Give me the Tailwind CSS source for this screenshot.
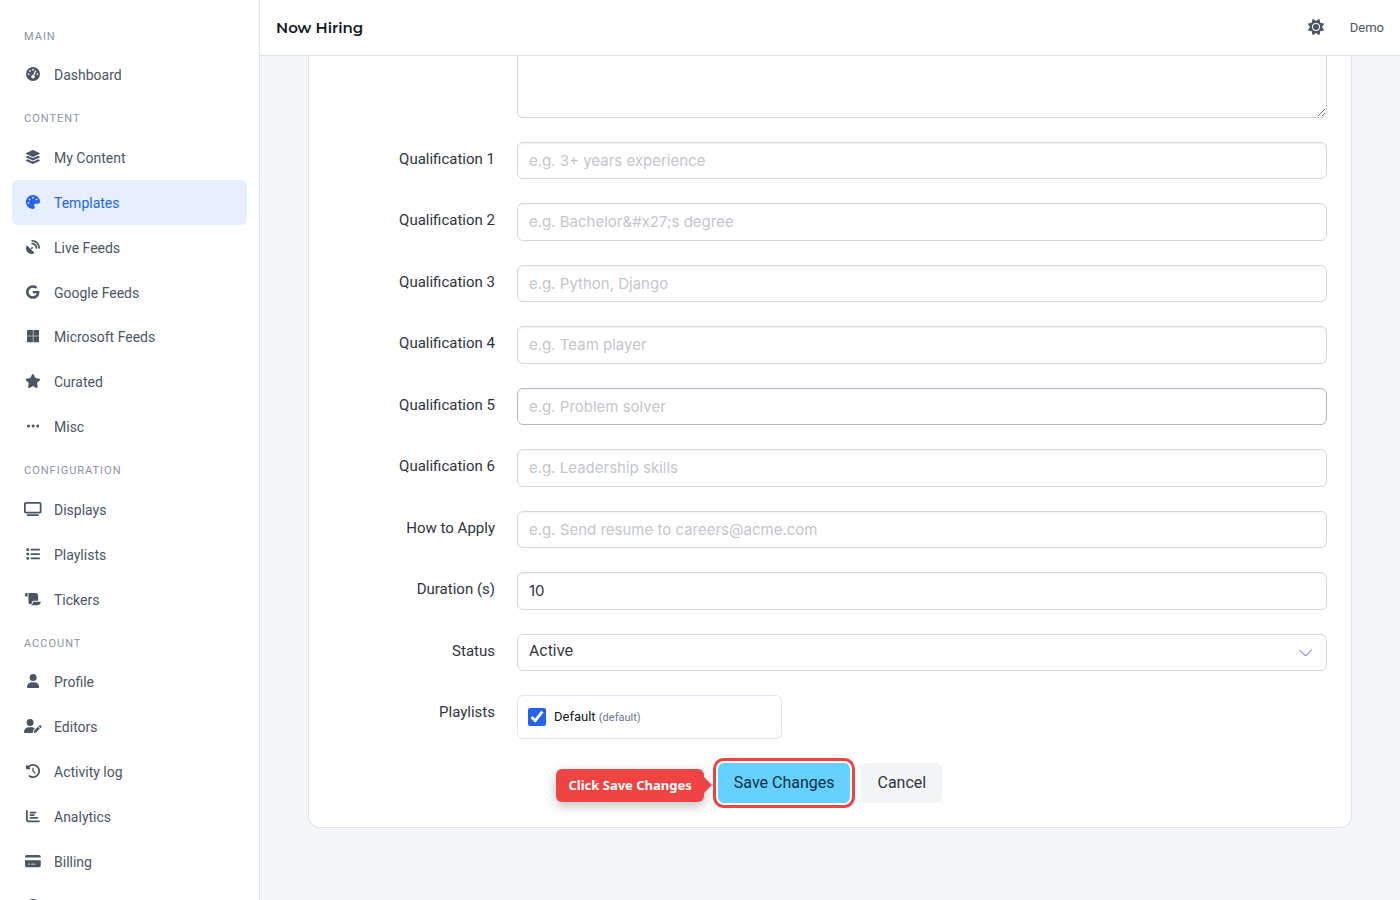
<!DOCTYPE html>
<html lang="en">
<head>
<meta charset="utf-8">
<meta name="viewport" content="width=device-width, initial-scale=1">
<title>Now Hiring</title>
<script src="https://cdn.jsdelivr.net/npm/@tailwindcss/browser@4"></script>
</head>
<body class="flex h-screen overflow-hidden bg-[#f3f5f9] font-['Roboto',sans-serif] text-[#2e333d]">

<aside class="w-[260px] shrink-0 overflow-hidden border-r border-[#e0e3eb] bg-white px-3 pt-4">
  <nav aria-label="Primary" class="text-sm text-[#4b5563]">
    <h2 class="flex h-9 items-center px-3 pt-[6px] text-[11px] tracking-[1px] text-[#8b93a3]">MAIN</h2>
    <a href="#" class="flex h-[45px] items-center gap-3 rounded-md px-3"><span class="flex w-[18px] justify-center pb-0.5"><svg class="h-[14px] w-auto" viewBox="0 0 512 512" fill="currentColor" aria-hidden="true"><path d="M0 256a256 256 0 1 1 512 0A256 256 0 1 1 0 256zM288 96a32 32 0 1 0-64 0 32 32 0 1 0 64 0zM256 416c35.3 0 64-28.7 64-64c0-17.4-6.9-33.1-18.1-44.6L366 161.7c5.3-12.1-.2-26.3-12.3-31.6s-26.3 .2-31.6 12.3L257.9 288c-.6 0-1.3 0-1.9 0c-35.3 0-64 28.7-64 64s28.7 64 64 64zM176 144a32 32 0 1 0-64 0 32 32 0 1 0 64 0zM96 288a32 32 0 1 0 0-64 32 32 0 1 0 0 64zm352-32a32 32 0 1 0-64 0 32 32 0 1 0 64 0z"/></svg></span>Dashboard</a>

    <h2 class="flex h-[38px] items-center px-3 pt-[6px] text-[11px] tracking-[1px] text-[#8b93a3]">CONTENT</h2>
    <a href="#" class="flex h-[45px] items-center gap-3 rounded-md px-3"><span class="flex w-[18px] justify-center pb-0.5"><svg class="h-[14px] w-auto" viewBox="0 0 576 512" fill="currentColor" aria-hidden="true"><path d="M264.5 5.2c14.9-6.9 32.1-6.9 47 0l218.6 101c8.5 3.9 13.9 12.4 13.9 21.8s-5.4 17.9-13.9 21.8l-218.6 101c-14.9 6.9-32.1 6.9-47 0L45.9 149.8C37.4 145.8 32 137.3 32 128s5.4-17.9 13.9-21.8L264.5 5.2zM476.9 209.6l53.2 24.6c8.5 3.9 13.9 12.4 13.9 21.8s-5.4 17.9-13.9 21.8l-218.6 101c-14.9 6.9-32.1 6.9-47 0L45.9 277.8C37.4 273.8 32 265.3 32 256s5.4-17.9 13.9-21.8l53.2-24.6 152 70.2c23.4 10.8 50.4 10.8 73.8 0l152-70.2zm-152 198.2l152-70.2 53.2 24.6c8.5 3.9 13.9 12.4 13.9 21.8s-5.4 17.9-13.9 21.8l-218.6 101c-14.9 6.9-32.1 6.9-47 0L45.9 405.8C37.4 401.8 32 393.3 32 384s5.4-17.9 13.9-21.8l53.2-24.6 152 70.2c23.4 10.8 50.4 10.8 73.8 0z"/></svg></span>My Content</a>
    <a href="#" aria-current="page" class="flex h-[45px] items-center gap-3 rounded-md bg-[#e6efff] px-3 text-[#2563eb]"><span class="flex w-[18px] justify-center pb-0.5"><svg class="h-[14px] w-auto" viewBox="0 0 512 512" fill="currentColor" aria-hidden="true"><path d="M512 256c0 .9 0 1.8 0 2.7c-.4 36.5-33.6 61.3-70.1 61.3L344 320c-26.5 0-48 21.5-48 48c0 3.4 .4 6.7 1 9.9c2.1 10.2 6.5 20 10.8 29.9c6.1 13.8 12.1 27.5 12.1 42c0 31.8-21.6 60.7-53.4 62c-3.5 .1-7 .2-10.6 .2C114.6 512 0 397.4 0 256S114.6 0 256 0S512 114.6 512 256zM128 288a32 32 0 1 0 -64 0 32 32 0 1 0 64 0zm0-96a32 32 0 1 0 0-64 32 32 0 1 0 0 64zM288 96a32 32 0 1 0 -64 0 32 32 0 1 0 64 0zm96 96a32 32 0 1 0 0-64 32 32 0 1 0 0 64z"/></svg></span>Templates</a>
    <a href="#" class="flex h-[45px] items-center gap-3 rounded-md px-3"><span class="flex w-[18px] justify-center pb-0.5"><svg class="h-[14px] w-auto" viewBox="0 0 512 512" fill="currentColor" aria-hidden="true"><path d="M192 32c0-17.7 14.3-32 32-32C383.1 0 512 128.9 512 288c0 17.7-14.3 32-32 32s-32-14.3-32-32C448 164.3 347.7 64 224 64c-17.7 0-32-14.3-32-32zM60.6 220.6L164.7 324.7l28.4-28.4c-.7-2.6-1.1-5.4-1.1-8.3c0-17.7 14.3-32 32-32s32 14.3 32 32s-14.3 32-32 32c-2.9 0-5.6-.4-8.3-1.1l-28.4 28.4L291.4 451.4c14.5 14.5 11.8 38.8-7.3 46.3C260.5 506.9 234.9 512 208 512C93.1 512 0 418.9 0 304c0-26.9 5.1-52.5 14.4-76.1c7.5-19 31.8-21.8 46.3-7.3zM224 96c106 0 192 86 192 192c0 17.7-14.3 32-32 32s-32-14.3-32-32c0-70.7-57.3-128-128-128c-17.7 0-32-14.3-32-32s14.3-32 32-32z"/></svg></span>Live Feeds</a>
    <a href="#" class="flex h-[45px] items-center gap-3 rounded-md px-3"><span class="flex w-[18px] justify-center pb-0.5"><svg class="h-[14px] w-auto" viewBox="0 0 488 512" fill="currentColor" aria-hidden="true"><path d="M488 261.8C488 403.3 391.1 504 248 504 110.8 504 0 393.2 0 256S110.8 8 248 8c66.8 0 123 24.5 166.3 64.9l-67.5 64.9C258.5 52.6 94.3 116.6 94.3 256c0 86.5 69.1 156.6 153.7 156.6 98.2 0 135-70.4 140.8-106.9H248v-85.3h236.1c2.3 12.7 3.9 24.9 3.9 41.4z"/></svg></span>Google Feeds</a>
    <a href="#" class="flex h-11 items-center gap-3 rounded-md px-3"><span class="flex w-[18px] justify-center pb-0.5"><svg class="h-[14px] w-auto" viewBox="0 0 448 512" fill="currentColor" aria-hidden="true"><path d="M0 32h214.6v214.6H0V32zm233.4 0H448v214.6H233.4V32zM0 265.4h214.6V480H0V265.4zm233.4 0H448V480H233.4V265.4z"/></svg></span>Microsoft Feeds</a>
    <a href="#" class="flex h-[45px] items-center gap-3 rounded-md px-3"><span class="flex w-[18px] justify-center pb-0.5"><svg class="h-[14px] w-auto" viewBox="0 0 576 512" fill="currentColor" aria-hidden="true"><path d="M316.9 18C311.6 7 300.4 0 288.1 0s-23.4 7-28.8 18L195 150.3 51.4 171.5c-12 1.8-22 10.2-25.7 21.7s-.7 24.2 7.9 32.7L137.8 329 113.2 474.7c-2 12 3 24.2 12.9 31.3s23 8 33.8 2.3l128.3-68.5 128.3 68.5c10.8 5.7 23.9 4.9 33.8-2.3s14.9-19.3 12.9-31.3L438.5 329 542.7 225.9c8.6-8.5 11.7-21.2 7.9-32.7s-13.7-19.9-25.7-21.7L381.2 150.3 316.9 18z"/></svg></span>Curated</a>
    <a href="#" class="flex h-[45px] items-center gap-3 rounded-md px-3"><span class="flex w-[18px] justify-center pb-0.5"><svg class="h-[14px] w-auto" viewBox="0 0 448 512" fill="currentColor" aria-hidden="true"><circle cx="56" cy="256" r="56"/><circle cx="224" cy="256" r="56"/><circle cx="392" cy="256" r="56"/></svg></span>Misc</a>

    <h2 class="flex h-[38px] items-center px-3 pt-[6px] text-[11px] tracking-[1px] text-[#8b93a3]">CONFIGURATION</h2>
    <a href="#" class="flex h-[45px] items-center gap-3 rounded-md px-3"><span class="flex w-[18px] justify-center pb-0.5"><svg class="h-[14px] w-auto" viewBox="0 0 640 512" fill="currentColor" aria-hidden="true"><path d="M64 64V352H576V64H64zM0 64C0 28.7 28.7 0 64 0H576c35.3 0 64 28.7 64 64V352c0 35.3-28.7 64-64 64H64c-35.3 0-64-28.7-64-64V64zM128 448H512c17.7 0 32 14.3 32 32s-14.3 32-32 32H128c-17.7 0-32-14.3-32-32s14.3-32 32-32z" fill-rule="evenodd"/></svg></span>Displays</a>
    <a href="#" class="flex h-[45px] items-center gap-3 rounded-md px-3"><span class="flex w-[18px] justify-center pb-0.5"><svg class="h-[14px] w-auto" viewBox="0 0 512 512" fill="currentColor" aria-hidden="true"><rect x="16" y="48" width="96" height="96" rx="24"/><rect x="16" y="208" width="96" height="96" rx="24"/><rect x="16" y="368" width="96" height="96" rx="24"/><rect x="160" y="64" width="352" height="64" rx="32"/><rect x="160" y="224" width="352" height="64" rx="32"/><rect x="160" y="384" width="352" height="64" rx="32"/></svg></span>Playlists</a>
    <a href="#" class="flex h-[45px] items-center gap-3 rounded-md px-3"><span class="flex w-[18px] justify-center pb-0.5"><svg class="h-[14px] w-auto" viewBox="0 0 576 512" fill="currentColor" aria-hidden="true"><path d="M0 80v48c0 17.7 14.3 32 32 32H48 96V80c0-26.5-21.5-48-48-48S0 53.5 0 80zM112 32c10 13.4 16 30 16 48V384c0 35.3 28.7 64 64 64s64-28.7 64-64v-5.3c0-32.4 26.3-58.7 58.7-58.7H480V128c0-53-43-96-96-96H112zM464 480c61.9 0 112-50.1 112-112c0-8.8-7.2-16-16-16H314.7c-14.7 0-26.7 11.9-26.7 26.7V384c0 53-43 96-96 96H368h96z"/></svg></span>Tickers</a>

    <h2 class="flex h-[37px] items-center px-3 pt-[6px] text-[11px] tracking-[1px] text-[#8b93a3]">ACCOUNT</h2>
    <a href="#" class="flex h-[45px] items-center gap-3 rounded-md px-3"><span class="flex w-[18px] justify-center pb-0.5"><svg class="h-[14px] w-auto" viewBox="0 0 448 512" fill="currentColor" aria-hidden="true"><path d="M224 256A128 128 0 1 0 224 0a128 128 0 1 0 0 256zm-45.7 48C79.8 304 0 383.8 0 482.3C0 498.7 13.3 512 29.7 512H418.3c16.4 0 29.7-13.3 29.7-29.7C448 383.8 368.2 304 269.7 304H178.3z"/></svg></span>Profile</a>
    <a href="#" class="flex h-[45px] items-center gap-3 rounded-md px-3"><span class="flex w-[18px] justify-center pb-0.5"><svg class="h-[14px] w-auto" viewBox="0 0 640 512" fill="currentColor" aria-hidden="true"><path d="M224 256A128 128 0 1 0 224 0a128 128 0 1 0 0 256zm-45.7 48C79.8 304 0 383.8 0 482.3C0 498.7 13.3 512 29.7 512H322.8c-3.1-8.8-3.7-18.4-1.4-27.8l15-60.1c2.8-11.3 8.6-21.5 16.8-29.7l40.3-40.3c-32.1-31-75.7-50.1-123.9-50.1H178.3zm435.5-68.3c-15.6-15.6-40.9-15.6-56.6 0l-29.4 29.4 71 71 29.4-29.4c15.6-15.6 15.6-40.9 0-56.6l-14.4-14.4zM375.9 417c-4.1 4.1-7 9.2-8.4 14.9l-15 60.1c-1.4 5.5 .2 11.2 4.2 15.2s9.7 5.6 15.2 4.2l60.1-15c5.6-1.4 10.8-4.3 14.9-8.4L576.1 358.7l-71-71L375.9 417z"/></svg></span>Editors</a>
    <a href="#" class="flex h-[45px] items-center gap-3 rounded-md px-3"><span class="flex w-[18px] justify-center pb-0.5"><svg class="h-[14px] w-auto" viewBox="0 0 512 512" fill="currentColor" aria-hidden="true"><path d="M75 75L41 41C25.9 25.9 0 36.6 0 57.9V168c0 13.3 10.7 24 24 24H134.1c21.4 0 32.1-25.9 17-41l-30.8-30.8C155 85.5 203 64 256 64c106 0 192 86 192 192s-86 192-192 192c-40.8 0-78.6-12.7-109.7-34.4c-14.5-10.1-34.4-6.6-44.6 7.9s-6.6 34.4 7.9 44.6C151.2 495 201.7 512 256 512c141.4 0 256-114.6 256-256S397.4 0 256 0C185.3 0 121.3 28.7 75 75zm181 53c-13.3 0-24 10.7-24 24V256c0 6.4 2.5 12.5 7 17l72 72c9.4 9.4 24.6 9.4 33.9 0s9.4-24.6 0-33.9l-65-65V152c0-13.3-10.7-24-24-24z"/></svg></span>Activity log</a>
    <a href="#" class="flex h-[45px] items-center gap-3 rounded-md px-3"><span class="flex w-[18px] justify-center pb-0.5"><svg class="h-[14px] w-auto" viewBox="0 0 512 512" fill="currentColor" aria-hidden="true"><path d="M32 32c17.7 0 32 14.3 32 32V400c0 8.8 7.2 16 16 16H480c17.7 0 32 14.3 32 32s-14.3 32-32 32H80c-44.2 0-80-35.8-80-80V64C0 46.3 14.3 32 32 32zm96 96c0-17.7 14.3-32 32-32l192 0c17.7 0 32 14.3 32 32s-14.3 32-32 32l-192 0c-17.7 0-32-14.3-32-32zm32 64H288c17.7 0 32 14.3 32 32s-14.3 32-32 32H160c-17.7 0-32-14.3-32-32s14.3-32 32-32zm0 96H416c17.7 0 32 14.3 32 32s-14.3 32-32 32H160c-17.7 0-32-14.3-32-32s14.3-32 32-32z"/></svg></span>Analytics</a>
    <a href="#" class="flex h-[45px] items-center gap-3 rounded-md px-3"><span class="flex w-[18px] justify-center pb-0.5"><svg class="h-[14px] w-auto" viewBox="0 0 576 512" fill="currentColor" aria-hidden="true"><path d="M64 32C28.7 32 0 60.7 0 96v32H576V96c0-35.3-28.7-64-64-64H64zM576 224H0V416c0 35.3 28.7 64 64 64H512c35.3 0 64-28.7 64-64V224zM112 352h64c8.8 0 16 7.2 16 16s-7.2 16-16 16H112c-8.8 0-16-7.2-16-16s7.2-16 16-16zm112 16c0-8.8 7.2-16 16-16H368c8.8 0 16 7.2 16 16s-7.2 16-16 16H240c-8.8 0-16-7.2-16-16z"/></svg></span>Billing</a>
    <a href="#" aria-label="Help" class="flex h-[45px] items-center gap-3 rounded-md px-3"><span class="flex w-[18px] justify-center pb-0.5"><svg class="h-[14px] w-auto" viewBox="0 0 512 512" fill="currentColor" aria-hidden="true"><circle cx="256" cy="256" r="256"/></svg></span></a>
  </nav>
</aside>

<div class="flex min-w-0 flex-1 flex-col">
  <header class="flex h-14 shrink-0 items-center justify-between border-b border-[#e0e3eb] bg-white px-4">
    <h1 class="pt-0.5 font-['Montserrat','Inter',sans-serif] text-[15px] font-semibold text-[#14161a]">Now Hiring</h1>
    <div class="flex items-center gap-[26px] text-[13px] text-[#4b5563]">
      <button type="button" aria-label="Toggle theme" class="pb-0.5"><svg class="size-4" viewBox="0 0 512 512" fill="currentColor" aria-hidden="true"><path d="M361.5 1.2c5 2.1 8.6 6.6 9.6 11.9L391 121l107.9 19.8c5.3 1 9.8 4.6 11.9 9.6s1.5 10.7-1.6 15.2L446.9 256l62.3 90.3c3.1 4.5 3.7 10.2 1.6 15.2s-6.6 8.6-11.9 9.6L391 391 371.1 498.9c-1 5.3-4.6 9.8-9.6 11.9s-10.7 1.5-15.2-1.6L256 446.9l-90.3 62.3c-4.5 3.1-10.2 3.7-15.2 1.6s-8.6-6.6-9.6-11.9L121 391 13.1 371.1c-5.3-1-9.8-4.6-11.9-9.6s-1.5-10.7 1.6-15.2L65.1 256 2.8 165.7c-3.1-4.5-3.7-10.2-1.6-15.2s6.6-8.6 11.9-9.6L121 121 140.9 13.1c1-5.3 4.6-9.8 9.6-11.9s10.7-1.5 15.2 1.6L256 65.1 346.3 2.8c4.5-3.1 10.2-3.7 15.2-1.6zM160 256a96 96 0 1 1 192 0 96 96 0 1 1 -192 0zm224 0a128 128 0 1 0 -256 0 128 128 0 1 0 256 0z"/></svg></button>
      <span>Demo</span>
    </div>
  </header>

  <main class="min-h-0 flex-1 overflow-hidden px-12">
    <form class="flex flex-col gap-6 rounded-b-xl border border-t-0 border-[#e0e3eb] bg-white px-6 pb-6 text-[15px]">
      <div class="grid grid-cols-[1fr_5fr] gap-[22px]">
        <span></span>
        <textarea aria-label="Description" class="block h-[62px] w-full resize-y rounded-b-md border border-t-0 border-[#d5d7e0] bg-white px-[11px] outline-none"></textarea>
      </div>
      <div class="grid grid-cols-[1fr_5fr] gap-[22px]">
        <label for="q1" class="pt-[6px] text-right leading-normal">Qualification 1</label>
        <input id="q1" type="text" placeholder="e.g. 3+ years experience" class="h-[37px] w-full rounded-md border border-[#d5d7e0] bg-white px-[11px] font-['Inter',sans-serif] shadow-[inset_0_1px_2px_rgba(10,10,10,0.05)] placeholder:text-[#c4c6cb]">
      </div>
      <div class="grid grid-cols-[1fr_5fr] gap-[22px]">
        <label for="q2" class="pt-[6px] text-right leading-normal">Qualification 2</label>
        <input id="q2" type="text" placeholder="e.g. Bachelor&amp;#x27;s degree" class="h-[2.5em] w-full rounded-md border border-[#d5d7e0] bg-white px-[11px] font-['Inter',sans-serif] shadow-[inset_0_1px_2px_rgba(10,10,10,0.05)] placeholder:text-[#c4c6cb]">
      </div>
      <div class="grid grid-cols-[1fr_5fr] gap-[22px]">
        <label for="q3" class="pt-[6px] text-right leading-normal">Qualification 3</label>
        <input id="q3" type="text" placeholder="e.g. Python, Django" class="h-[2.5em] w-full rounded-md border border-[#d5d7e0] bg-white px-[11px] font-['Inter',sans-serif] shadow-[inset_0_1px_2px_rgba(10,10,10,0.05)] placeholder:text-[#c4c6cb]">
      </div>
      <div class="grid grid-cols-[1fr_5fr] gap-[22px]">
        <label for="q4" class="pt-[6px] text-right leading-normal">Qualification 4</label>
        <input id="q4" type="text" placeholder="e.g. Team player" class="h-[2.5em] w-full rounded-md border border-[#d5d7e0] bg-white px-[11px] font-['Inter',sans-serif] shadow-[inset_0_1px_2px_rgba(10,10,10,0.05)] placeholder:text-[#c4c6cb]">
      </div>
      <div class="grid grid-cols-[1fr_5fr] gap-[22px]">
        <label for="q5" class="pt-[6px] text-right leading-normal">Qualification 5</label>
        <input id="q5" type="text" placeholder="e.g. Problem solver" class="h-[2.5em] w-full rounded-md border border-[#b4b8c8] bg-white px-[11px] font-['Inter',sans-serif] shadow-[inset_0_1px_2px_rgba(10,10,10,0.05)] placeholder:text-[#c4c6cb]">
      </div>
      <div class="grid grid-cols-[1fr_5fr] gap-[22px]">
        <label for="q6" class="pt-[6px] text-right leading-normal">Qualification 6</label>
        <input id="q6" type="text" placeholder="e.g. Leadership skills" class="h-[2.5em] w-full rounded-md border border-[#d5d7e0] bg-white px-[11px] font-['Inter',sans-serif] shadow-[inset_0_1px_2px_rgba(10,10,10,0.05)] placeholder:text-[#c4c6cb]">
      </div>
      <div class="grid grid-cols-[1fr_5fr] gap-[22px]">
        <label for="apply" class="pt-[6px] text-right leading-normal">How to Apply</label>
        <input id="apply" type="text" placeholder="e.g. Send resume to careers@acme.com" class="h-[2.5em] w-full rounded-md border border-[#d5d7e0] bg-white px-[11px] font-['Inter',sans-serif] shadow-[inset_0_1px_2px_rgba(10,10,10,0.05)] placeholder:text-[#c4c6cb]">
      </div>
      <div class="grid grid-cols-[1fr_5fr] gap-[22px]">
        <label for="duration" class="pt-[6px] text-right leading-normal">Duration (s)</label>
        <input id="duration" type="number" value="10" class="h-[2.5em] w-full rounded-md border border-[#d5d7e0] bg-white px-[11px] font-['Inter',sans-serif] shadow-[inset_0_1px_2px_rgba(10,10,10,0.05)]">
      </div>
      <div class="grid grid-cols-[1fr_5fr] gap-[22px]">
        <label for="status" class="pt-[6px] text-right leading-normal">Status</label>
        <div class="relative">
          <select id="status" class="block h-[2.5em] w-full appearance-none rounded-md border border-[#d5d7e0] bg-white px-[11px] pb-0.5 font-['Inter',sans-serif]"><option>Active</option><option>Inactive</option></select>
          <svg class="pointer-events-none absolute top-[15px] right-[14px] h-2 w-[14px]" viewBox="0 0 14 8" fill="none" stroke="#4258ff" aria-hidden="true"><path d="M.5 1l6 6 6-6"/></svg>
        </div>
      </div>
      <div class="grid grid-cols-[1fr_5fr] gap-[22px]">
        <span class="pt-[6px] text-right leading-normal">Playlists</span>
        <div class="flex h-11 w-[265px] items-center rounded-md border border-[#e3e5f0] px-[10px]">
          <label class="flex items-center gap-2 text-[13px] text-[#14161a]"><input type="checkbox" checked class="size-[18px] accent-[#2563eb]"><span>Default <small class="text-[11px] text-[#69748c]">(default)</small></span></label>
        </div>
      </div>
      <div class="flex justify-center gap-[11px] text-base">
        <div class="relative">
          <button type="submit" class="h-10 rounded-md bg-[#66d1ff] px-4 text-[#0a2f40] outline-3 outline-offset-2 outline-[#ef4444]">Save Changes</button>
          <div role="tooltip" class="absolute top-[6px] right-full mr-[14px] flex h-[33px] items-center rounded-md bg-[#ef4444] px-3 font-['Noto_Sans',sans-serif] text-[13px] font-bold whitespace-nowrap text-white shadow-[0_4px_12px_rgba(0,0,0,0.25)]">Click Save Changes<span class="absolute top-2 left-full border-y-8 border-l-8 border-y-transparent border-l-[#ef4444]"></span></div>
        </div>
        <button type="button" class="h-10 rounded-md bg-[#f3f4f6] px-4">Cancel</button>
      </div>
    </form>
  </main>
</div>
</body>
</html>
